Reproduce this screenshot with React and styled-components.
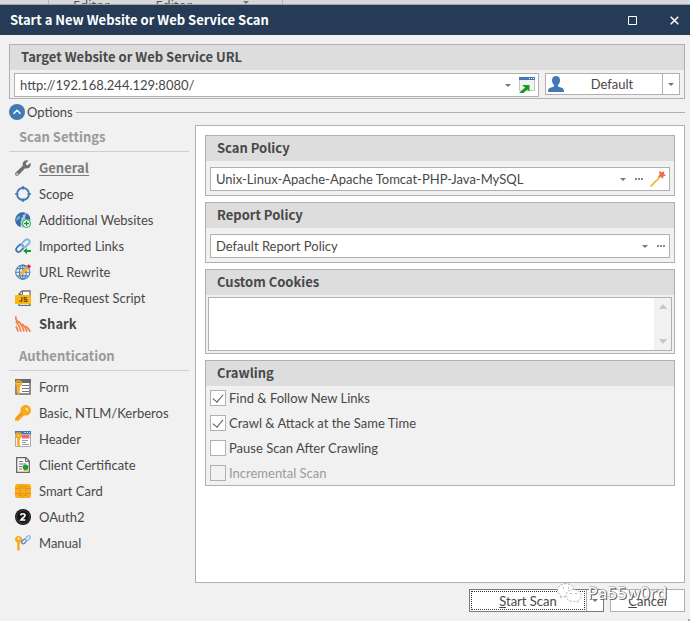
import React from "react";
import styled, { createGlobalStyle, css } from "styled-components";

const line = "#b0b0b0";
const headingFont = '"Noto Sans CJK SC", "Noto Sans", sans-serif';

const GlobalStyle = createGlobalStyle`
  * { box-sizing: border-box; }
  body {
    margin: 0;
    background: #f1f1f1;
    color: #484848;
    font: 13px/18px Lato, "Noto Sans", sans-serif;
  }
  button, input, select, textarea { font: inherit; color: inherit; }
`;

const Window = styled.div`
  position: relative;
  display: flex;
  flex-direction: column;
  min-height: 100vh;
`;

const Ribbon = styled.div`
  display: flex;
  height: 5px;
  overflow: hidden;
  background: #d8d8d8;
  border-bottom: 1px solid #a6a6a6;
  color: #555;
  font-family: "Noto Sans", sans-serif;
  line-height: 10px;
`;

const RibbonCell = styled.div`
  flex: none;
  display: flex;
  justify-content: space-between;
  width: ${(p) => p.$width}px;
  padding: ${(p) => p.$pad || "0"};
  border-right: 1px solid #b4b4b4;
`;

const TitleBar = styled.header`
  display: flex;
  align-items: center;
  height: 30px;
  padding: 0 4px 0 10px;
  background: #263b56;
  color: #fff;
`;

const Title = styled.h1`
  flex: 1;
  margin: 0;
  font-family: ${headingFont};
  font-size: 13px;
  line-height: 18px;
  font-weight: 700;
`;

const WindowButton = styled.button`
  display: grid;
  place-items: center;
  width: 24px;
  height: 24px;
  margin-left: 18px;
  padding: 0;
  border: 0;
  background: none;
`;

const Body = styled.main`
  flex: 1;
  display: flex;
  flex-direction: column;
  padding: 9px 5px 9px 9px;
`;

const Group = styled.section`
  border: 1px solid ${line};
  background: #f1f1f1;
`;

const GroupTitle = styled.h2`
  height: 25px;
  margin: 0;
  padding: 0 11px;
  background: #ddd;
  font-family: ${headingFont};
  font-size: 13px;
  line-height: 24px;
  font-weight: 700;
`;

const TargetRow = styled.div`
  display: flex;
  gap: 6px;
  padding: 3px 4px 1px;
`;

const FieldWrap = styled.div`
  padding: 6px 4px 4px;
`;

const Field = styled.div`
  flex: 1;
  display: flex;
  align-items: center;
  height: 24px;
  padding-left: 5px;
  border: 1px solid ${line};
  background: #fff;
`;

const textual = css`
  flex: 1;
  min-width: 0;
  height: 20px;
  padding: 0;
  border: 0;
  outline: 0;
  background: none;
  appearance: none;
`;

const TextInput = styled.input`${textual}`;
const Select = styled.select`${textual}`;

const IconButton = styled.button`
  display: grid;
  place-items: center;
  width: ${(p) => p.$width || 16}px;
  height: 22px;
  padding: 0;
  border: 0;
  background: none;
`;

const ArrowSlot = styled.span`
  display: grid;
  place-items: center;
  width: 16px;
  pointer-events: none;
`;

const Split = styled.div`
  display: flex;
  width: ${(p) => p.$width}px;
  height: ${(p) => p.$height}px;
  border: 1px solid ${(p) => (p.$primary ? "#7a7a7a" : line)};
  background: #fff;
`;

const SplitMain = styled.button`
  flex: 1;
  display: flex;
  align-items: center;
  padding: 0 2px;
  border: 0;
  background: none;
  line-height: 18px;
  span { flex: 1; text-align: center; }
  ${(p) => p.$dotted && css`
    margin: 1px;
    border: 1px dotted #333;
  `}
`;

const SplitArrow = styled.button`
  display: grid;
  place-items: center;
  width: 17px;
  padding: 0;
  border: 0;
  border-left: 1px solid ${line};
  background: none;
`;

const OptionsRow = styled.div`
  display: flex;
  align-items: center;
  height: 26px;
  gap: 3px;
  &::after {
    content: "";
    flex: 1;
    height: 1px;
    background: ${line};
  }
`;

const OptionsToggle = styled.button`
  display: flex;
  align-items: center;
  gap: 2px;
  padding: 0;
  border: 0;
  background: none;
`;

const Columns = styled.div`
  flex: 1;
  display: flex;
  gap: 6px;
`;

const Sidebar = styled.nav`
  flex: none;
  width: 180px;
`;

const NavTitle = styled.h3`
  height: ${(p) => (p.$first ? 27 : 34)}px;
  margin: 0;
  padding: ${(p) => (p.$first ? 3 : 10)}px 10px 0;
  border-bottom: 1px solid #cfcfcf;
  color: #999;
  font-family: ${headingFont};
  font-size: 13px;
  line-height: 18px;
  font-weight: 700;
`;

const NavList = styled.ul`
  margin: 0;
  padding: 3px 0 0;
  list-style: none;
`;

const NavLink = styled.a`
  display: flex;
  align-items: center;
  gap: 8px;
  height: 26px;
  padding-left: 6px;
  color: ${(p) => (p.$current ? "#7a7a7a" : "#484848")};
  font-family: ${(p) => (p.$bold ? headingFont : "inherit")};
  font-weight: ${(p) => (p.$bold ? 700 : 400)};
  text-decoration: none;
  span {
    border-bottom: ${(p) => (p.$current ? "1px solid #7a7a7a" : "0")};
    line-height: 14px;
  }
`;

const Panel = styled.div`
  flex: 1;
  display: flex;
  flex-direction: column;
  gap: 6px;
  padding: 9px;
  border: 1px solid ${line};
  background: #fff;
`;

const Cookies = styled.div`
  display: flex;
  height: 54px;
  margin: 2px;
  border: 1px solid ${line};
  background: #fff;
`;

const CookieText = styled.textarea`
  flex: 1;
  padding: 4px;
  border: 0;
  outline: 0;
  resize: none;
  background: #fff;
`;

const ScrollTrack = styled.div`
  display: flex;
  flex-direction: column;
  justify-content: space-between;
  align-items: center;
  width: 17px;
  padding: 6px 0;
  background: #f1f1f1;
`;

const Checks = styled.div`
  display: flex;
  flex-direction: column;
  gap: 9px;
  padding: 4px;
`;

const CheckLabel = styled.label`
  display: flex;
  align-items: center;
  gap: 3px;
  height: 16px;
  color: ${(p) => (p.$disabled ? "#9c9c9c" : "inherit")};
`;

const CheckBox = styled.input`
  appearance: none;
  width: 16px;
  height: 16px;
  margin: 0;
  border: 1px solid ${line};
  background: #fff;
  &:disabled { background: #f1f1f1; }
  &:checked {
    display: grid;
    place-items: center;
  }
  &:checked::after {
    content: "";
    width: 5px;
    height: 9px;
    margin-bottom: 3px;
    border: solid #555;
    border-width: 0 1px 1px 0;
    transform: rotate(40deg);
  }
`;

const Footer = styled.footer`
  display: flex;
  justify-content: flex-end;
  gap: 6px;
  padding-top: 6px;
`;

const Cancel = styled.button`
  width: 75px;
  height: 23px;
  padding: 0;
  border: 1px solid ${line};
  background: #fff;
  line-height: 18px;
`;

const Watermark = styled.div`
  position: absolute;
  right: 23px;
  bottom: 16px;
  display: flex;
  align-items: center;
  gap: 6px;
  color: #fff;
  font-family: "Noto Sans", sans-serif;
  font-size: 17px;
  line-height: 24px;
  pointer-events: none;
  text-shadow: 1px 1px 0 #666, 1px 0 0 #888, 0 -1px 0 #bbb;
`;

const Grip = styled.span`
  position: absolute;
  right: 0;
  bottom: 0;
  width: 2px;
  height: 2px;
  background: #aaa;
`;

const Icon = ({ size = 16, children }) => (
  <svg width={size} height={size} viewBox={`0 0 ${size} ${size}`} fill="none" aria-hidden="true">
    {children}
  </svg>
);

const Caret = () => (
  <svg width="6" height="3" viewBox="0 0 6 3" aria-hidden="true">
    <path d="M0 0H6L3 3Z" fill="#777" />
  </svg>
);

const Dots = () => (
  <svg width="9" height="2" viewBox="0 0 9 2" aria-hidden="true">
    <path d="M0 0h2v2H0zM3 0h2v2H3zM6 0h2v2H6z" fill="#888" />
  </svg>
);

const ScrollArrow = ({ down }) => (
  <svg width="8" height="5" viewBox="0 0 8 5" aria-hidden="true">
    <path d={down ? "M0 0H8L4 5Z" : "M0 5H8L4 0Z"} fill="#c6c6c6" />
  </svg>
);

const UprightKey = () => (
  <path
    fillRule="evenodd"
    fill="#f9a91b"
    d="M3.500 1C1.400 1 0 2.300 0 4.200C0 5.800.9 6.800 2.200 7.400V14.500L3.400 16L5 14.500V13L4.200 12L5 11L4.300 10L5 9V7.400C6.300 6.800 7.200 5.800 7.200 4.200C7.200 2.300 5.600 1 3.500 1ZM3.500 2.400A1.200 1.200 0 1 1 3.500 4.800A1.200 1.200 0 0 1 3.500 2.400Z"
  />
);

const ChainLinks = ({ light, dark }) => (
  <g strokeWidth="1.900" strokeLinecap="round">
    <path stroke={dark} d="M7.400 7.200C6.300 6.300 5 6.500 4.100 7.400L1.900 9.600C.8 10.700.8 12.200 1.900 13.200C3 14.200 4.400 14.200 5.400 13.200L7.700 10.900C8.600 10 8.700 8.700 8 7.800" />
    <path stroke={light} d="M7.700 8.700C8.700 9.500 10 9.400 10.900 8.500L13.900 5.500C14.900 4.500 14.900 3.100 13.900 2C12.800 1 11.300 1 10.300 2L7.600 4.700C6.700 5.600 6.600 6.800 7.200 7.800" />
  </g>
);

const icons = {
  wrench: (
    <Icon>
      <path fill="#6e6e6e" d="M13.300 0.700L10.800 3.200L11.200 4.900L12.900 5.200L15.300 2.700C16.100 4.500 15.700 6.300 14.400 7.500C13.200 8.500 11.800 8.700 10.400 8.300L9.200 9.200L3.300 15.300C2.500 16.100 1.300 16 .6 15.300C-.1 14.500-.1 13.400.7 12.600L7.600 6L7.800 5.400C7.300 4 7.700 2.500 8.800 1.400C10 .2 11.700-.1 13.300.7Z" />
      <circle cx="2.200" cy="13.900" r=".9" fill="#f1f1f1" />
    </Icon>
  ),
  scope: (
    <Icon>
      <circle cx="8" cy="8" r="6" stroke="#4179b5" strokeWidth="1.800" />
      <path d="M8 0V3.500M8 12.500V16M0 8H3.500M12.500 8H16" stroke="#4179b5" strokeWidth="1.600" />
    </Icon>
  ),
  websites: (
    <Icon>
      <circle cx="7.800" cy="7.800" r="7.600" fill="#a9cbe4" />
      <path d="M1 4.500C2.500 1.800 5.200.2 8 .2L10.500 1L9.600 2.600L7.500 3.100L7.900 4.700L5.800 6.500L6.800 8L5.300 9.800L6.200 12L5 15C1.800 13.600.2 11 .2 8Z" fill="#346da9" />
      <path d="M11.200 1.300C13.800 2.500 15.300 4.900 15.400 7.600L11.800 7.800L9.700 6L10.500 4.300Z" fill="#346da9" />
      <path d="M2 5L5 3.500L4.500 7L1 9Z" fill="#7cacd1" />
      <circle cx="11.500" cy="11.500" r="4" fill="#fff" stroke="#1ca23c" strokeWidth="1" />
      <path d="M11.500 8.900V14.100M8.900 11.500H14.100" stroke="#129b33" strokeWidth="1.300" />
    </Icon>
  ),
  links: (
    <Icon>
      <ChainLinks light="#80b7df" dark="#4179b5" />
      <path d="M8.200 12.900L12 9.900V12H16V14H12V16Z" fill="#159b35" />
    </Icon>
  ),
  rewrite: (
    <Icon>
      <g stroke="#4882b8" strokeWidth="1.100">
        <circle cx="7.800" cy="8.200" r="7.100" />
        <ellipse cx="7.800" cy="8.200" rx="3.400" ry="7.100" />
        <path d="M.8 8.200H14.800M2 4.600H13.500M2 11.900H13.500M7.800 1V15.500" />
      </g>
      <path d="M5.100 11L6 8L11.400 2.600L13.700 5L8.200 10.400Z" fill="#f9b12b" />
      <path d="M11.900 2.100L13.700.3L16 2.600L14.200 4.400Z" fill="#df252d" />
    </Icon>
  ),
  script: (
    <Icon>
      <path d="M4 6V4L7 1H15V15.300H4V13" fill="#fff" stroke="#6f6f6f" strokeWidth="1.300" />
      <path d="M4 4.500H7.500V1" stroke="#6f6f6f" />
      <rect y="5" width="16" height="9" rx="1" fill="#fdb515" />
      <path d="M6.800 7V11.200H4.300M11.800 7.500H9.200V9.300H11.800V11.400H8.800" stroke="#654d15" strokeWidth="1.200" />
    </Icon>
  ),
  shark: (
    <Icon>
      <g stroke="#f4804b" strokeWidth="1.700">
        <path d="M.9.300V3.200L4.300 7" />
        <path d="M.9 5.200C3.500 8.300 5.300 11.800 5.900 15.700" />
        <path d="M.9 10.200C2 11.800 2.700 13.600 3 15.700" />
        <path d="M4.200 5.600C6.700 8.500 8.300 12 9 15.700" />
        <path d="M7.200 7.800C9.600 10 11.200 12.700 12.100 15.700" />
        <path d="M10.500 10C12.600 11.500 14.200 13.300 15.300 15.700" />
      </g>
    </Icon>
  ),
  form: (
    <Icon>
      <path d="M1 1H15V15H1Z" fill="#fff" stroke="#6b6b6b" strokeWidth="1.500" />
      <path d="M0 0H16V4H0Z" fill="#6b6b6b" />
      <path d="M7 6.500H14M7 9.500H14M7 12.500H14" stroke="#777" />
      <UprightKey />
    </Icon>
  ),
  key: (
    <Icon>
      <path fillRule="evenodd" fill="#f9a91b" d="M6.800 1.600C8.900-.5 12.300-.5 14.400 1.500C16.500 3.600 16.500 6.900 14.500 9C13 10.500 11 10.900 9.200 10.300L3.900 15.600L.2 16L0 13.200L5.700 6.800C5.100 5 5.500 3 6.800 1.600ZM11.300 2.800L10.300 3.900L12.400 6L13.400 4.900Z" />
      <path d="M1.200 14.200L7 8.300" stroke="#d98a13" />
    </Icon>
  ),
  header: (
    <Icon>
      <path d="M.5.5H15.500V15.500H.5Z" fill="#fff" stroke="#aaa" />
      <path d="M0 0H16V3.500H0Z" fill="#4179b5" />
      <path d="M9.500 1H11V2H9.500zM12 1h1v1h-1zM14 1h1v1h-1z" fill="#cfe2f2" />
      <path d="M7 4H14.500V7.500H7Z" fill="#fa626d" />
      <path d="M7 9.500H13M7 11.500H11M7 13.500H14" stroke="#999" />
      <UprightKey />
    </Icon>
  ),
  certificate: (
    <Icon>
      <path d="M1.700.7H11L14.300 4V15.300H1.700Z" fill="#f8f8f8" stroke="#666" strokeWidth="1.300" />
      <path d="M10.500 1V4.500H14" stroke="#666" />
      <path d="M4 4.500H8M4 7H11M4 9.500H7.500M4 12H7" stroke="#777" />
      <path d="M8.700 11H12.600V15L10.700 13.800L8.700 15Z" fill="#f5b925" />
      <circle cx="10.500" cy="10.200" r="2.700" fill="#179a35" />
    </Icon>
  ),
  card: (
    <Icon>
      <rect y="1" width="16" height="14" rx="2.500" fill="#f9ad1d" />
      <path d="M0 5.500H4.500V3.500H7V1M0 10.500H4.500V12.500H7V15M16 5.500H11.500V3.500H9M16 10.500H11.500V12.500H9M5.500 6L7 5H10L11 7V10L9.500 11H6L5 9Z" stroke="#dc8b12" strokeWidth=".7" />
    </Icon>
  ),
  oauth: (
    <Icon>
      <circle cx="8" cy="8" r="8" fill="#161616" />
      <circle cx="8" cy="8" r="6.500" stroke="#555" strokeWidth=".7" />
      <path d="M5.700 6.400C5.900 4.200 9.900 4.200 10 6.300C10.100 8 7.500 8.800 6 11H10.400" stroke="#fff" strokeWidth="1.700" />
    </Icon>
  ),
  manual: (
    <Icon>
      <UprightKey />
      <g transform="translate(6 0) scale(.63)">
        <ChainLinks light="#80b7df" dark="#4179b5" />
      </g>
    </Icon>
  ),
};

const scanSettings = [
  ["General", "wrench", true, true],
  ["Scope", "scope"],
  ["Additional Websites", "websites"],
  ["Imported Links", "links"],
  ["URL Rewrite", "rewrite"],
  ["Pre-Request Script", "script"],
  ["Shark", "shark", true],
];

const authentication = [
  ["Form", "form"],
  ["Basic, NTLM/Kerberos", "key"],
  ["Header", "header"],
  ["Client Certificate", "certificate"],
  ["Smart Card", "card"],
  ["OAuth2", "oauth"],
  ["Manual", "manual"],
];

const NavItems = ({ items }) => (
  <NavList>
    {items.map(([label, icon, bold, current]) => (
      <li key={label}>
        <NavLink href="#" $bold={bold} $current={current} aria-current={current ? "page" : undefined}>
          {icons[icon]}
          <span>{label}</span>
        </NavLink>
      </li>
    ))}
  </NavList>
);

const Check = ({ label, disabled, checked }) => (
  <CheckLabel $disabled={disabled}>
    <CheckBox type="checkbox" defaultChecked={checked} disabled={disabled} />
    {label}
  </CheckLabel>
);

export default function App() {
  return (
    <>
      <GlobalStyle />
      <Window>
        <Ribbon aria-hidden="true">
          <RibbonCell $width={49} />
          <RibbonCell $width={234} $pad="0 28px 0 24px">
            <span>Editor</span>
            <span>Editor</span>
            <ArrowSlot><Caret /></ArrowSlot>
          </RibbonCell>
        </Ribbon>
        <TitleBar>
          <Title>Start a New Website or Web Service Scan</Title>
          <WindowButton aria-label="Maximize">
            <Icon size={9}><path d="M.5.5H8.500V8.500H.5Z" stroke="#fff" /></Icon>
          </WindowButton>
          <WindowButton aria-label="Close">
            <Icon size={9}><path d="M.7.7L8.300 8.300M8.300.7L.7 8.300" stroke="#fff" strokeWidth="1.500" /></Icon>
          </WindowButton>
        </TitleBar>
        <Body>
          <Group>
            <GroupTitle>Target Website or Web Service URL</GroupTitle>
            <TargetRow>
              <Field>
                <TextInput aria-label="Target Website or Web Service URL" defaultValue="http://192.168.244.129:8080/" />
                <IconButton aria-label="Recent URLs"><Caret /></IconButton>
                <IconButton $width={22} aria-label="Open in browser">
                  <Icon>
                    <path d="M.5.5H15.500V13.500H.5Z" fill="#f3f3f3" stroke="#c4c4c4" />
                    <path d="M0 0H16V3H0Z" fill="#4179b5" />
                    <path d="M10 1h1v1h-1zM12 1h1v1h-1zM14 1h1v1h-1z" fill="#fff" />
                    <path d="M3 8H10.500V14.500L8.400 12.500L4.500 16H0L6 10.400Z" fill="#129c25" />
                  </Icon>
                </IconButton>
              </Field>
              <Split $width={135} $height={22}>
                <SplitMain>
                  <Icon>
                    <path d="M4 4C4 1.300 5.600 0 8 0S12 1.300 12 4C12 6.300 11.300 7.800 10 9V10.500L14.300 12C15.500 12.500 16 13.500 16 16H0C0 13.500.5 12.500 1.700 12L6 10.500V9C4.700 7.800 4 6.300 4 4Z" fill="#4179b5" />
                  </Icon>
                  <span>Default</span>
                </SplitMain>
                <SplitArrow aria-label="Choose profile"><Caret /></SplitArrow>
              </Split>
            </TargetRow>
          </Group>
          <OptionsRow>
            <OptionsToggle aria-expanded="true">
              <Icon>
                <circle cx="8" cy="8" r="8" fill="#4179b5" />
                <path d="M4.500 9.700L8 6.300L11.500 9.700" stroke="#fff" strokeWidth="1.500" />
              </Icon>
              Options
            </OptionsToggle>
          </OptionsRow>
          <Columns>
            <Sidebar>
              <NavTitle $first>Scan Settings</NavTitle>
              <NavItems items={scanSettings} />
              <NavTitle>Authentication</NavTitle>
              <NavItems items={authentication} />
            </Sidebar>
            <Panel>
              <Group>
                <GroupTitle>Scan Policy</GroupTitle>
                <FieldWrap>
                  <Field>
                    <Select aria-label="Scan Policy">
                      <option>Unix-Linux-Apache-Apache Tomcat-PHP-Java-MySQL</option>
                    </Select>
                    <ArrowSlot><Caret /></ArrowSlot>
                    <IconButton aria-label="Browse scan policies"><Dots /></IconButton>
                    <IconButton $width={22} aria-label="Scan policy optimizer">
                      <Icon>
                        <path d="M.5 15.500L11 5" stroke="#fbb32b" strokeWidth="1.700" />
                        <path d="M9 0L12 1.300L14.300 0L14 2.800L16 4.500L13.700 5.300L12.500 8L11 5.800L7.800 6.200L9.500 3.500Z" fill="#e77549" />
                      </Icon>
                    </IconButton>
                  </Field>
                </FieldWrap>
              </Group>
              <Group>
                <GroupTitle>Report Policy</GroupTitle>
                <FieldWrap>
                  <Field>
                    <Select aria-label="Report Policy">
                      <option>Default Report Policy</option>
                    </Select>
                    <ArrowSlot><Caret /></ArrowSlot>
                    <IconButton aria-label="Browse report policies"><Dots /></IconButton>
                  </Field>
                </FieldWrap>
              </Group>
              <Group>
                <GroupTitle>Custom Cookies</GroupTitle>
                <Cookies>
                  <CookieText aria-label="Custom Cookies" />
                  <ScrollTrack><ScrollArrow /><ScrollArrow down /></ScrollTrack>
                </Cookies>
              </Group>
              <Group>
                <GroupTitle>Crawling</GroupTitle>
                <Checks>
                  <Check label="Find & Follow New Links" checked />
                  <Check label="Crawl & Attack at the Same Time" checked />
                  <Check label="Pause Scan After Crawling" />
                  <Check label="Incremental Scan" disabled />
                </Checks>
              </Group>
            </Panel>
          </Columns>
          <Footer>
            <Split $width={135} $height={23} $primary>
              <SplitMain $dotted><span><u>S</u>tart Scan</span></SplitMain>
              <SplitArrow aria-label="More scan options"><Caret /></SplitArrow>
            </Split>
            <Cancel><u>C</u>ancel</Cancel>
          </Footer>
        </Body>
        <Watermark>
          <svg width="25" height="20" viewBox="0 0 25 20" aria-hidden="true">
            <g fill="#fff" stroke="#999" strokeWidth=".8" strokeDasharray="2 1.500">
              <path d="M9 .7C4 .7.7 3.700.7 7.300C.7 9.500 1.800 11.300 3.700 12.500L3 15L6 13.500C11 14.700 17 12 17 7.300C17 3.700 14 .7 9 .7Z" />
              <path d="M16.500 6.500C12 6.500 9 9.300 9 12.500C9 16 12 18.500 16.500 18.500L19 18.200L21.500 19.500L21 17.500C23 16.300 24.200 14.600 24.200 12.500C24.200 9.300 21 6.500 16.500 6.500Z" />
            </g>
            <path d="M6 4.500h1v1H6zM11 4.500h1v1h-1zM13.500 10h1v1h-1zM18.500 10h1v1h-1z" fill="#777" />
          </svg>
          Pa55w0rd
        </Watermark>
        <Grip />
      </Window>
    </>
  );
}
